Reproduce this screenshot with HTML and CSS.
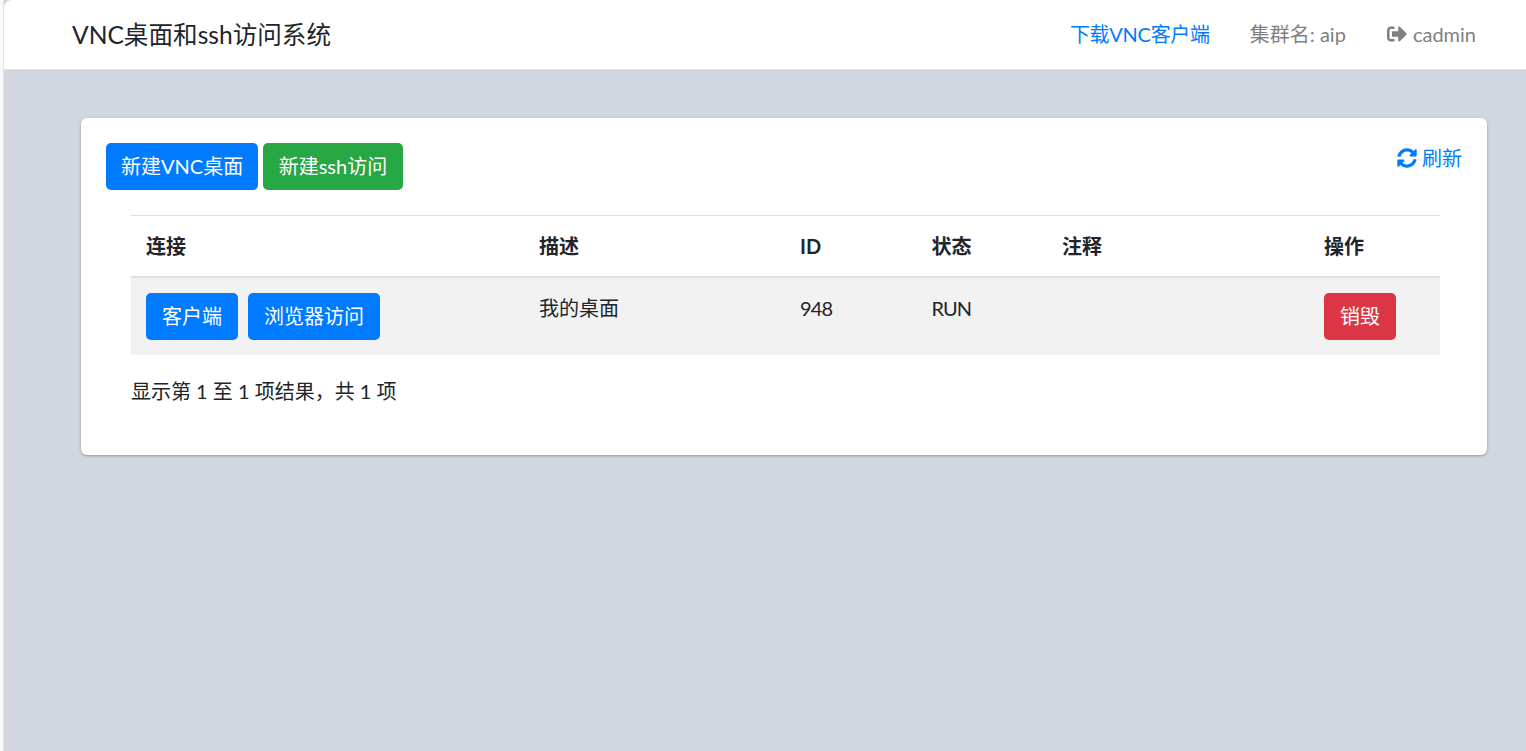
FILE: index.html
```html
<!DOCTYPE html>
<html lang="zh">
<head>
<meta charset="utf-8">
<title>VNC桌面和ssh访问系统</title>
<link rel="stylesheet" href="styles.css">
</head>
<body>
<div class="side"></div>
<div class="wrapper">
  <nav class="navbar">
    <span class="brand">VNC桌面和ssh访问系统</span>
    <ul class="nav">
      <li><a class="nav-link link-blue" href="#">下载VNC客户端</a></li>
      <li><span class="nav-link">集群名: aip</span></li>
      <li><a class="nav-link user" href="#">
        <svg class="ico-out" viewBox="0 0 512 512" width="20" height="20"><path fill="currentColor" d="M497 273L329 441c-15 15-41 4.500-41-17v-96H152c-13.300 0-24-10.700-24-24v-96c0-13.300 10.700-24 24-24h136V88c0-21.400 25.900-32 41-17l168 168c9.300 9.400 9.300 24.600 0 34zM192 436v-40c0-6.600-5.400-12-12-12H96c-17.700 0-32-14.300-32-32V160c0-17.700 14.300-32 32-32h84c6.600 0 12-5.400 12-12V76c0-6.600-5.400-12-12-12H96c-53 0-96 43-96 96v192c0 53 43 96 96 96h84c6.600 0 12-5.400 12-12z"/></svg>
        cadmin</a></li>
    </ul>
  </nav>
  <main class="content">
    <section class="card">
      <div class="toolbar">
        <div class="actions">
          <a class="btn btn-blue btn-vnc" href="#">新建VNC桌面</a>
          <a class="btn btn-green btn-ssh" href="#">新建ssh访问</a>
        </div>
        <a class="refresh" href="#">
          <svg class="ico-sync" viewBox="0 0 512 512" width="20" height="20"><path fill="currentColor" d="M370.720 133.280C339.458 104.008 298.888 87.962 255.848 88c-77.458.068-144.328 53.178-162.791 126.850-1.344 5.363-6.122 9.150-11.651 9.150H24.103c-7.498 0-13.194-6.807-11.807-14.176C33.933 94.924 134.813 8 256 8c66.448 0 126.791 26.136 171.315 68.685L463.030 40.970C478.149 25.851 504 36.559 504 57.941V192c0 13.255-10.745 24-24 24H345.941c-21.382 0-32.090-25.851-16.971-40.971l41.750-41.749zM32 296h134.059c21.382 0 32.090 25.851 16.971 40.971l-41.750 41.750c31.262 29.273 71.835 45.319 114.876 45.280 77.418-.070 144.315-53.144 162.787-126.849 1.344-5.363 6.122-9.150 11.651-9.150h57.304c7.498 0 13.194 6.807 11.807 14.176C478.067 417.076 377.187 504 256 504c-66.448 0-126.791-26.136-171.315-68.685L48.970 471.030C33.851 486.149 8 475.441 8 454.059V320c0-13.255 10.745-24 24-24z"/></svg>
          刷新</a>
      </div>
      <div class="table-wrap">
        <table class="table">
          <thead>
            <tr>
              <th class="c1">连接</th>
              <th class="c2">描述</th>
              <th class="c3">ID</th>
              <th class="c4">状态</th>
              <th class="c5">注释</th>
              <th class="c6">操作</th>
            </tr>
          </thead>
          <tbody>
            <tr>
              <td><div class="cell-btns"><a class="btn btn-blue" href="#">客户端</a><a class="btn btn-blue" href="#">浏览器访问</a></div></td>
              <td>我的桌面</td>
              <td class="tight">948</td>
              <td class="tight">RUN</td>
              <td></td>
              <td><a class="btn btn-red" href="#">销毁</a></td>
            </tr>
          </tbody>
        </table>
        <div class="info">显示第 1 至 1 项结果，共 1 项</div>
      </div>
    </section>
  </main>
</div>
</body>
</html>
```
FILE: styles.css
```css
* { box-sizing: border-box; }
html, body { height: 100%; }
body {
  margin: 0;
  display: flex;
  height: 751px;
  overflow: hidden;
  background: #f8f9fa;
  font-family: Lato, "Noto Sans CJK SC", sans-serif;
  font-size: 20px;
  line-height: 30px;
  color: #212529;
}
a { text-decoration: none; }
.side { width: 3px; flex: none; background: #f8f9fa; }
.wrapper {
  flex: 1;
  display: flex;
  flex-direction: column;
  background: #d2d6de;
  border-left: 1px solid #dee2e6;
}
.navbar {
  height: 70px;
  flex: none;
  display: flex;
  align-items: center;
  justify-content: space-between;
  padding: 0 50px 0 68px;
  background: #fff;
  border-bottom: 1px solid #dee2e6;
  border-top-left-radius: 8px;
}
.brand { font-size: 24.6px; line-height: 37px; color: #212529; }
.nav { display: flex; gap: 40px; list-style: none; margin: 0; padding: 0; }
.nav-link { color: #808080; font-size: 20px; }
.link-blue { color: #007bff; letter-spacing: -0.28px; }
.user { display: inline-flex; align-items: center; gap: 6px; margin-left: 1px; }
.ico-out { display: block; }
.content { padding: 48px 39px 0 77px; }
.card {
  background: #fff;
  border-radius: 6px;
  height: 337px;
  padding: 25px 25px 0;
  box-shadow: 0 1px 3px rgba(0,0,0,.3);
}
.toolbar { display: flex; justify-content: space-between; align-items: flex-start; }
.actions { display: flex; gap: 5px; }
.btn {
  display: inline-block;
  height: 47px;
  padding: 0 16px;
  line-height: 47px;
  font-size: 20px;
  color: #fff;
  border-radius: 5px;
  white-space: nowrap;
}
.btn-vnc { padding: 0 15px; }
.btn-ssh { padding: 0 15.5px; }
.btn-blue { background: #007bff; }
.btn-green { background: #28a745; }
.btn-red { background: #dc3545; }
.refresh {
  display: flex;
  align-items: center;
  gap: 5px;
  color: #007bff;
  font-size: 20px;
  line-height: 30px;
}
.table-wrap { padding: 25px 22px 0 25px; }
.table { width: 100%; border-collapse: collapse; table-layout: fixed; color: #212529; font-size: 20px; }
.table th {
  height: 61px;
  padding: 0 15px;
  text-align: left;
  font-weight: 700;
  border-top: 1px solid #dee2e6;
  border-bottom: 2px solid #dee2e6;
}
.table td { padding: 15px; vertical-align: top; background: #f2f2f2; height: 78px; }
.table .tight { letter-spacing: -0.9px; }
.c1 { width: 393px; }
.c2 { width: 261px; }
.c3 { width: 131.5px; }
.c4 { width: 130.5px; }
.c5 { width: 262px; }
.cell-btns { display: flex; gap: 10px; }
.info { padding-top: 21px; font-size: 20px; line-height: 30px; }
```
